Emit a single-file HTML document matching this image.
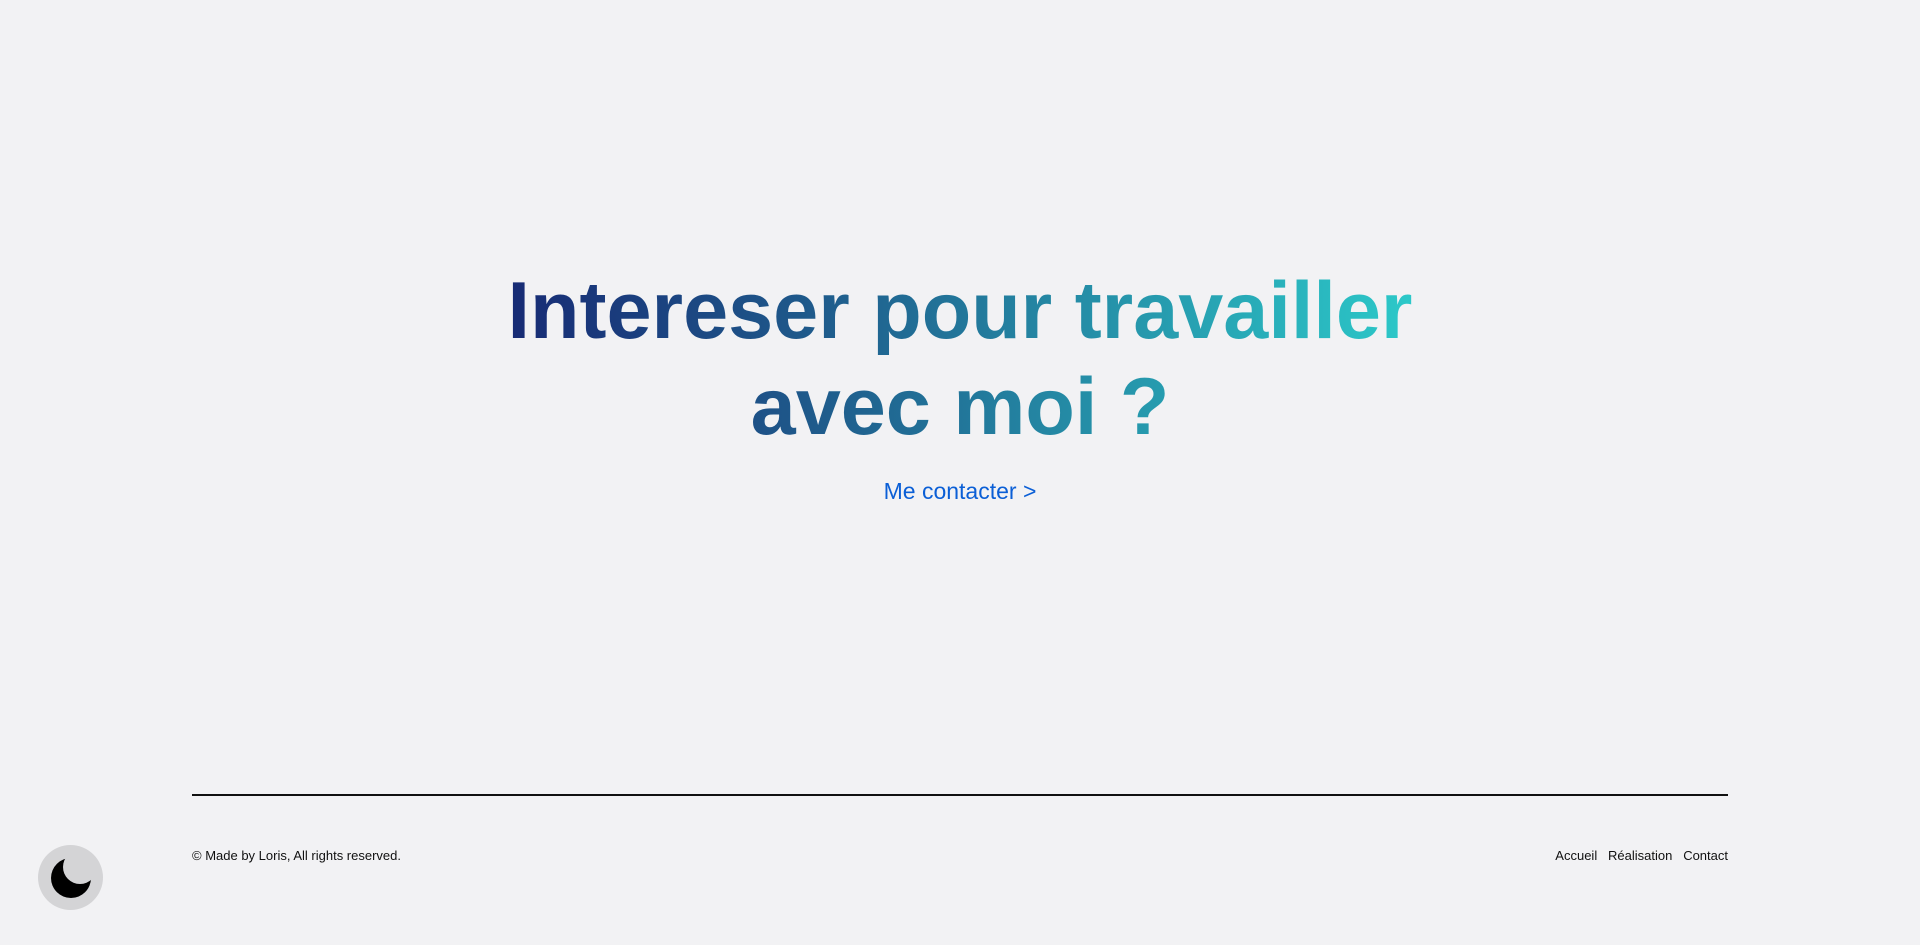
<!DOCTYPE html>
<html><head><meta charset="utf-8"><style>
html,body{margin:0;padding:0;width:1920px;height:945px;background:#f2f2f4;overflow:hidden;font-family:"Liberation Sans",Arial,sans-serif;}
h1{position:absolute;left:0;top:263px;width:1920px;margin:0;text-align:center;font-size:81px;line-height:96px;font-weight:700;}
h1 span{background:linear-gradient(90deg,#172a74 0%,#1f5c8c 35%,#2590a8 65%,#2cc9c9 100%);-webkit-background-clip:text;background-clip:text;color:transparent;display:inline-block;width:910px;}
.cta{position:absolute;left:0;width:1920px;top:478px;text-align:center;font-size:23px;color:#0b5fd6;}
.line{position:absolute;left:192px;width:1536px;top:794px;height:1.5px;background:#111;}
.foot{position:absolute;top:848px;font-size:13px;color:#111;}
.moon{position:absolute;left:38px;top:845px;width:65px;height:65px;border-radius:50%;background:#d4d4d6;}
</style></head><body>
<h1><span>Intereser pour travailler<br>avec moi ?</span></h1>
<div class="cta">Me contacter &gt;</div>
<div class="line"></div>
<div class="foot" style="left:192px">© Made by Loris, All rights reserved.</div>
<div class="foot" style="right:192px">Accueil&nbsp;&nbsp; Réalisation&nbsp;&nbsp; Contact</div>
<div class="moon"><svg width="65" height="65" viewBox="0 0 65 65">
<defs><mask id="m"><rect width="65" height="65" fill="#fff"/><circle cx="42" cy="22" r="17" fill="#000"/></mask></defs>
<circle cx="33" cy="33" r="20" fill="#000" mask="url(#m)"/></svg></div>
</body></html>
